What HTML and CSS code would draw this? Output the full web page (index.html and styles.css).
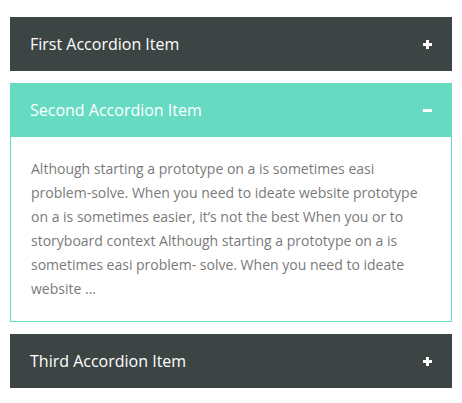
FILE: index.html
```html
<!DOCTYPE html>
<html>
<head>
<meta charset="utf-8">
<link rel="stylesheet" href="styles.css">
</head>
<body>
<div class="accordion">
  <div class="item">
    <div class="head">
      <span class="title">First Accordion Item</span>
      <span class="icon plus"></span>
    </div>
  </div>
  <div class="item open">
    <div class="head">
      <span class="title">Second Accordion Item</span>
      <span class="icon minus"></span>
    </div>
    <div class="body">
      <p>Although starting a prototype on a is sometimes easi problem-solve. When you need to ideate website prototype on a is sometimes easier, it’s not the best When you or to storyboard context Although starting a prototype on a is sometimes easi problem- solve. When you need to ideate website ...</p>
    </div>
  </div>
  <div class="item">
    <div class="head">
      <span class="title">Third Accordion Item</span>
      <span class="icon plus"></span>
    </div>
  </div>
</div>
</body>
</html>
```
FILE: styles.css
```css
* { box-sizing: border-box; }
html, body { margin: 0; padding: 0; background: #fff; }
body { font-family: "Open Sans", sans-serif; }
.accordion {
  padding: 17px 10px 0 10px;
  display: flex;
  flex-direction: column;
  gap: 12px;
}
.head {
  height: 54px;
  background: #3c4544;
  color: #fff;
  display: flex;
  align-items: center;
  justify-content: space-between;
  padding: 0 20px 0 20px;
}
.open .head { background: #66dbc2; }
.title { font-size: 16px; line-height: 1; }
.icon {
  position: relative;
  flex: 0 0 9px;
  width: 9px;
  height: 9px;
  display: block;
}
.plus::before, .plus::after, .minus::before {
  content: "";
  position: absolute;
  background: #fff;
}
.plus::before { left: 0; right: 0; top: 3px; height: 3px; }
.plus::after { top: 0; bottom: 0; left: 3px; width: 3px; }
.minus::before { left: 0; right: 0; top: 3px; height: 3px; }
.body {
  border: 1px solid #66dbc2;
  border-top: none;
  padding: 20px 20px 20px 20px;
}
.body p {
  margin: 0;
  font-size: 14px;
  line-height: 24px;
  color: #7a7a7a;
}
```
